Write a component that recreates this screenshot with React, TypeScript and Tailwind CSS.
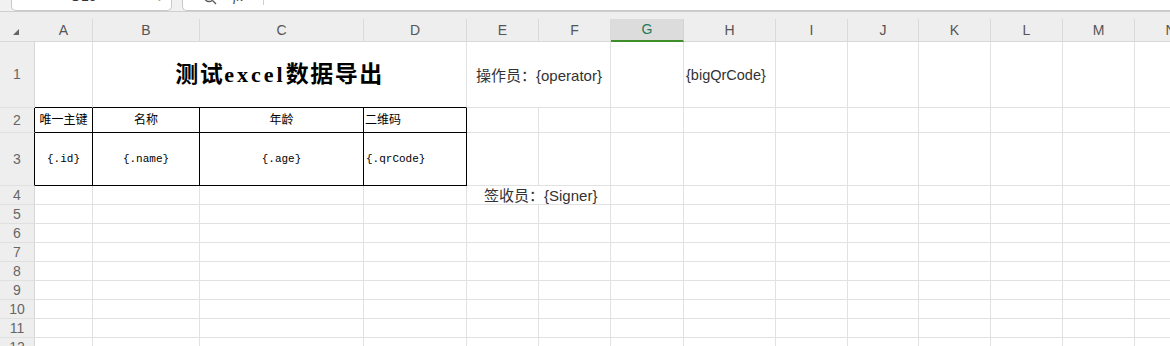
import React from "react"

const cols = ["A", "B", "C", "D", "E", "F", "G", "H", "I", "J", "K", "L", "M", "N"]
const widths = [58, 107, 164, 103, 72, 72, 73, 92, 72, 71, 72, 72, 72, 72]
const heights = [66, 25, 53, 19, 19, 19, 19, 19, 19, 19, 19, 19]

const grid = "35px 58px 107px 164px 103px 72px 72px 73px 92px 72px 71px 72px 72px 72px 72px"

const sans = { fontFamily: '"Liberation Sans", "Noto Sans CJK SC", sans-serif' }
const serif = { fontFamily: '"Liberation Serif", "Noto Sans CJK SC", serif' }
const mono = { fontFamily: '"Liberation Mono", monospace' }

function RowHead({ n, h, black }: { n: number; h: number; black?: boolean }) {
  return (
    <div
      className={`flex items-center justify-center bg-[#eeeeee] border-b border-b-[#e0e0e0] border-r text-[14px] text-[#666666] ${black ? "border-r-black" : "border-r-[#d6d6d6]"}`}
      style={{ height: h }}
    >
      {n}
    </div>
  )
}

function Cell({ h, children, className = "" }: { h: number; children?: React.ReactNode; className?: string }) {
  return (
    <div className={`border-r border-b border-[#e1e1e1] overflow-visible whitespace-nowrap ${className}`} style={{ height: h }}>
      {children}
    </div>
  )
}

export default function App() {
  return (
    <div className="w-[1170px] h-[346px] overflow-hidden bg-white" style={sans}>
      {/* formula bar */}
      <div className="h-[12px] bg-[#f1f1f1] border-b border-[#cfcfcf] relative flex">
        <div className="ml-[11px] w-[161px] h-[11px] bg-white border border-t-0 border-[#c8c8c8] rounded-b-[5px] relative overflow-hidden">
          <span className="absolute left-[58px] top-[-12px] text-[14px] leading-[16px] text-[#333]">O15</span>
          <span className="absolute right-[8px] top-[-6px] text-[8px] leading-[10px] text-[#999]">⌄</span>
        </div>
        <div className="ml-[10px] flex-1 h-[11px] bg-white border border-t-0 border-r-0 border-[#c8c8c8] rounded-bl-[5px] relative overflow-hidden">
          <svg className="absolute left-[20px] -top-[9px]" width="14" height="14" viewBox="0 0 14 14" fill="none" stroke="#555" strokeWidth="1.3">
            <circle cx="6" cy="6" r="4.5" />
            <path d="M9.5 9.5 L13 13" />
          </svg>
          <span className="absolute left-[50px] top-[-11px] text-[14px] leading-[16px] italic text-[#444]" style={serif}>fx</span>
          <div className="absolute left-[80px] top-0 w-px h-[5px] bg-[#d0d0d0]" />
        </div>
      </div>

      {/* column headers */}
      <div className="grid h-[30px] bg-[#eeeeee] border-b border-[#d8d8d8]" style={{ gridTemplateColumns: grid }}>
        <div className="flex items-end justify-center pb-[6px]">
          <svg width="8" height="8" viewBox="0 0 8 8" className="ml-[-4px]">
            <path d="M7 1 L7 7 L1 7 Z" fill="#666" />
          </svg>
        </div>
        {cols.map((c, i) => (
          <div
            key={c}
            className={`mt-[7px] flex items-center justify-center text-[14px] ${
              c === "G"
                ? "bg-[#dcdcdc] text-[#217a5c] border-b-2 border-b-[#3e8e2a] border-r border-r-[#d4d4d4]"
                : "text-[#555] border-r border-r-[#dadada]"
            }`}
            style={{ width: widths[i] }}
          >
            {c}
          </div>
        ))}
      </div>

      {/* rows */}
      <div className="grid" style={{ gridTemplateColumns: grid }}>
        {/* row 1 */}
        <RowHead n={1} h={66} />
        <Cell h={66} className="border-b-black" />
        <Cell h={66} className="col-span-3 border-b-black flex items-center justify-center pt-[2px]">
          <span className="text-[23px] font-bold text-black tracking-[1.5px] flex items-baseline" style={serif}>
            测试<span className="text-[22px] tracking-[3px]">excel</span>数据导出
          </span>
        </Cell>
        <Cell h={66} className="col-span-2 flex items-center pl-[9px] pt-[3px] text-[15px] text-[#333]">
          操作员：{"{operator}"}
        </Cell>
        <Cell h={66} />
        <Cell h={66} className="flex items-center pl-[2px] pt-[3px] text-[14.5px] text-[#333]">
          {"{bigQrCode}"}
        </Cell>
        {widths.slice(8).map((_, i) => (
          <Cell key={"r1" + i} h={66} />
        ))}

        {/* row 2 */}
        <RowHead n={2} h={25} black />
        <Cell h={25} className="border-black flex items-center justify-center text-[12px] text-black">唯一主键</Cell>
        <Cell h={25} className="border-black flex items-center justify-center text-[12px] text-black">名称</Cell>
        <Cell h={25} className="border-black flex items-center justify-center text-[12px] text-black">年龄</Cell>
        <Cell h={25} className="border-black flex items-center pl-[1px] text-[12px] text-black">二维码</Cell>
        {widths.slice(4).map((_, i) => (
          <Cell key={"r2" + i} h={25} />
        ))}

        {/* row 3 */}
        <RowHead n={3} h={53} black />
        <Cell h={53} className="border-black flex items-center justify-center text-[11px] text-black">
          <span style={mono}>{"{.id}"}</span>
        </Cell>
        <Cell h={53} className="border-black flex items-center justify-center text-[11px] text-black">
          <span style={mono}>{"{.name}"}</span>
        </Cell>
        <Cell h={53} className="border-black flex items-center justify-center text-[11px] text-black">
          <span style={mono}>{"{.age}"}</span>
        </Cell>
        <Cell h={53} className="border-black flex items-center pl-[2px] text-[11px] text-black">
          <span style={mono}>{"{.qrCode}"}</span>
        </Cell>
        {widths.slice(4).map((_, i) => (
          <Cell key={"r3" + i} h={53} />
        ))}

        {/* row 4 */}
        <RowHead n={4} h={19} />
        {widths.slice(0, 4).map((_, i) => (
          <Cell key={"r4a" + i} h={19} />
        ))}
        <Cell h={19} className="col-span-2 flex items-center pl-[17px] pt-[3px] text-[15px] text-[#333]">
          签收员：{"{Signer}"}
        </Cell>
        {widths.slice(6).map((_, i) => (
          <Cell key={"r4b" + i} h={19} />
        ))}

        {/* rows 5.. */}
        {heights.slice(4).map((h, r) => (
          <React.Fragment key={"row" + r}>
            <RowHead n={r + 5} h={h} />
            {widths.map((_, i) => (
              <Cell key={i} h={h} />
            ))}
          </React.Fragment>
        ))}
      </div>
    </div>
  )
}
